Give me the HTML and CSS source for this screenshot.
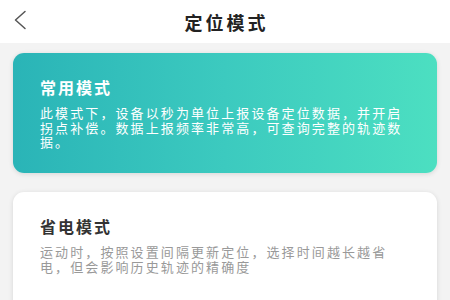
FILE: index.html
```html
<!DOCTYPE html>
<html lang="zh">
<head>
<meta charset="utf-8">
<link rel="stylesheet" href="styles.css">
</head>
<body>
<div class="page">
  <header class="nav">
    <span class="back">
      <svg width="14" height="20" viewBox="0 0 14 20"><path d="M12 1.5 L2.5 10 L12 18.5" fill="none" stroke="#555" stroke-width="1.5" stroke-linecap="round" stroke-linejoin="round"/></svg>
    </span>
    <h1 class="nav-title">定位模式</h1>
  </header>
  <main class="list">
    <section class="card card-active">
      <h2 class="card-title">常用模式</h2>
      <p class="card-desc">此模式下，设备以秒为单位上报设备定位数据，并开启拐点补偿。数据上报频率非常高，可查询完整的轨迹数据。</p>
    </section>
    <section class="card">
      <h2 class="card-title">省电模式</h2>
      <p class="card-desc">运动时，按照设置间隔更新定位，选择时间越长越省电，但会影响历史轨迹的精确度</p>
    </section>
  </main>
</div>
</body>
</html>
```
FILE: styles.css
```css
html, body { margin: 0; padding: 0; }
body {
  width: 450px;
  height: 300px;
  overflow: hidden;
  background: #f3f3f3;
  font-family: "Noto Sans CJK SC", "Noto Sans", sans-serif;
}
.nav {
  position: relative;
  height: 43px;
  background: #fff;
  display: flex;
  align-items: center;
  justify-content: center;
}
.back {
  position: absolute;
  left: 13px;
  top: 10px;
  display: flex;
}
.nav-title {
  margin: 0;
  font-size: 18px;
  font-weight: 700;
  letter-spacing: 3px;
  color: #222;
  padding-left: 3px;
}
.list {
  display: flex;
  flex-direction: column;
  gap: 19px;
  padding: 10px 13px 0;
}
.card {
  background: #fff;
  border-radius: 11px;
  box-shadow: 0 1px 5px rgba(0,0,0,0.12);
  padding: 22px 32px 20px 27px;
  height: 120px;
  box-sizing: border-box;
}
.card-active {
  background: linear-gradient(90deg, #2ab4b7 0%, #3ccabf 50%, #4cdfc1 100%);
}
.card-title {
  margin: 0 0 7px;
  font-size: 16px;
  font-weight: 700;
  letter-spacing: 2px;
  line-height: 24px;
  color: #333;
}
.card-desc {
  margin: 0;
  font-size: 13px;
  letter-spacing: 2.1px;
  line-height: 14.5px;
  color: #999;
}
.card-active .card-title,
.card-active .card-desc { color: #fff; }
```
